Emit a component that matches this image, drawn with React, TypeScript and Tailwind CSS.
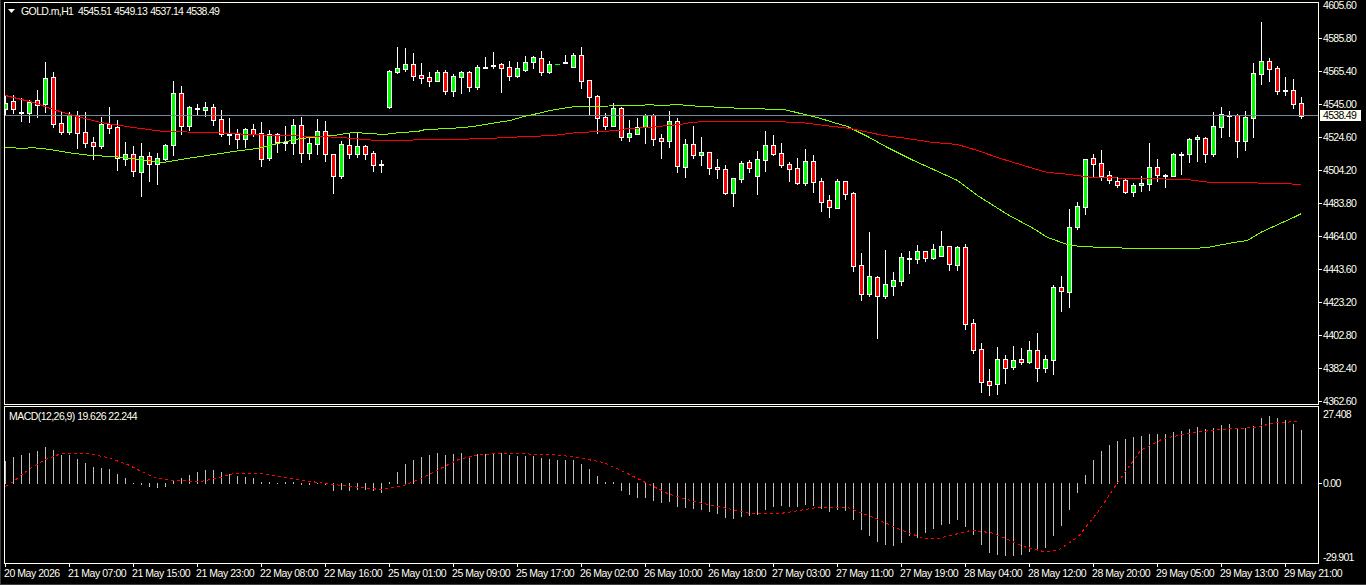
// MT4 style chart: GOLD.m H1 with two moving averages and MACD
type Candle = [number, number, number, number, number]

// high, body top, body bottom, low (page pixels), kind: 0 red, 1 green, 2 doji, 3 flat green
const candles: Candle[] = [
  [96, 103, 109, 115, 1], [95, 101, 109, 113, 0], [98, 112, 112, 121, 2], [100, 102, 113, 122, 1],
  [90, 100, 105, 117, 0], [62, 78, 104, 112, 1], [72, 77, 124, 127, 0], [112, 123, 132, 134, 0],
  [112, 115, 132, 134, 1], [111, 115, 133, 148, 0], [112, 132, 143, 147, 0], [137, 142, 146, 159, 0],
  [117, 124, 146, 148, 1], [107, 124, 128, 133, 0], [120, 127, 158, 170, 0], [142, 154, 159, 165, 1],
  [146, 154, 171, 176, 0], [143, 156, 172, 196, 1], [152, 156, 164, 181, 0], [153, 158, 164, 184, 1],
  [144, 145, 159, 160, 1], [81, 93, 145, 155, 1], [86, 93, 126, 134, 0], [106, 107, 126, 130, 1],
  [104, 108, 108, 114, 2], [102, 107, 110, 116, 1], [104, 107, 120, 125, 0], [110, 119, 134, 136, 0],
  [118, 134, 134, 144, 2], [129, 134, 139, 148, 0], [128, 129, 139, 147, 1], [124, 129, 134, 136, 0],
  [122, 133, 159, 166, 0], [130, 134, 158, 160, 1], [133, 134, 142, 152, 0], [126, 142, 142, 150, 2],
  [119, 125, 143, 154, 1], [117, 125, 153, 162, 0], [136, 143, 153, 159, 1], [119, 131, 144, 154, 1],
  [121, 131, 154, 161, 0], [154, 154, 176, 193, 0], [141, 144, 176, 178, 1], [134, 145, 154, 158, 0],
  [133, 146, 154, 157, 1], [145, 146, 154, 159, 0], [151, 153, 165, 171, 0], [160, 164, 164, 172, 2],
  [70, 71, 107, 108, 1], [47, 68, 72, 73, 1], [48, 64, 69, 71, 1], [53, 64, 76, 80, 0],
  [63, 75, 78, 83, 0], [72, 77, 81, 86, 0], [70, 72, 81, 81, 1], [70, 72, 91, 94, 0],
  [74, 76, 91, 96, 1], [71, 72, 77, 93, 1], [71, 72, 87, 91, 0], [65, 67, 87, 89, 1],
  [57, 67, 67, 68, 2], [52, 65, 65, 68, 2], [63, 64, 68, 92, 0], [61, 67, 76, 80, 0],
  [62, 68, 76, 77, 1], [56, 62, 70, 71, 1], [56, 57, 62, 68, 1], [51, 58, 72, 75, 0],
  [61, 64, 72, 73, 1], [64, 64, 64, 64, 3], [55, 62, 62, 63, 2], [53, 55, 67, 67, 1],
  [47, 55, 81, 88, 0], [80, 80, 97, 114, 0], [95, 96, 118, 133, 0], [113, 117, 126, 129, 0],
  [103, 108, 126, 126, 1], [107, 108, 137, 140, 0], [120, 133, 137, 141, 1], [118, 127, 134, 134, 1],
  [114, 115, 127, 143, 1], [114, 115, 139, 145, 0], [134, 138, 141, 158, 0], [111, 121, 141, 147, 1],
  [118, 121, 166, 172, 0], [139, 144, 167, 177, 1], [126, 144, 155, 158, 0], [137, 152, 155, 165, 1],
  [152, 152, 168, 174, 0], [159, 167, 169, 178, 0], [165, 169, 193, 194, 0], [178, 178, 193, 206, 1],
  [161, 163, 179, 182, 1], [160, 162, 168, 172, 0], [151, 159, 176, 194, 1], [131, 145, 160, 171, 1],
  [135, 145, 154, 155, 0], [143, 153, 165, 167, 0], [162, 164, 169, 181, 0], [158, 168, 183, 184, 0],
  [149, 161, 183, 185, 1], [155, 161, 182, 192, 0], [178, 181, 202, 211, 0], [195, 200, 207, 217, 0],
  [179, 181, 208, 208, 1], [181, 181, 194, 199, 0], [192, 193, 266, 271, 0], [253, 265, 294, 300, 0],
  [232, 276, 294, 296, 1], [276, 277, 296, 338, 0], [250, 284, 296, 298, 1], [272, 280, 286, 295, 1],
  [253, 257, 281, 285, 1], [251, 258, 258, 273, 2], [245, 251, 259, 263, 1], [251, 251, 258, 261, 0],
  [244, 249, 258, 259, 1], [231, 246, 256, 256, 1], [246, 246, 264, 270, 0], [246, 247, 265, 270, 1],
  [244, 247, 324, 329, 0], [319, 323, 350, 353, 0], [343, 349, 382, 392, 0], [369, 381, 385, 395, 0],
  [347, 359, 384, 394, 1], [355, 359, 368, 383, 0], [346, 360, 367, 369, 1], [348, 359, 362, 364, 0],
  [341, 350, 362, 363, 1], [333, 350, 368, 381, 0], [355, 359, 368, 372, 1], [285, 287, 360, 374, 1],
  [276, 287, 291, 311, 0], [209, 227, 292, 307, 1], [202, 206, 227, 229, 1], [159, 159, 207, 214, 1],
  [154, 158, 164, 177, 0], [150, 163, 176, 180, 0], [171, 175, 180, 183, 0], [177, 181, 185, 187, 0],
  [179, 180, 192, 193, 0], [183, 185, 192, 196, 1], [176, 183, 185, 191, 1], [143, 167, 184, 190, 1],
  [159, 167, 175, 181, 0], [174, 175, 175, 187, 2], [153, 154, 176, 176, 1], [152, 154, 154, 174, 2],
  [138, 139, 154, 162, 1], [135, 137, 139, 161, 1], [137, 138, 154, 162, 0], [112, 126, 154, 156, 1],
  [107, 114, 127, 137, 1], [111, 115, 115, 136, 2], [114, 115, 141, 157, 0], [111, 117, 141, 150, 1],
  [63, 73, 118, 137, 1], [22, 61, 74, 84, 1], [58, 61, 69, 81, 0], [66, 68, 91, 94, 0],
  [77, 90, 90, 95, 2], [79, 90, 104, 108, 0], [97, 103, 116, 118, 0],
]

const greenMa = '5,147 25,148 30,147 50,149 67,152 90,155 113,156 140,159 163,162 180,159 200,156 233,151 257,148 277,143 300,138 333,135 353,132 370,133 383,134 400,132 417,131 425,129 450,128 473,126 490,123 510,120 523,116 533,114 550,110 567,107 577,106 640,105 650,104 657,105 682,104 683,105 705,106 722,107 745,108 783,109 792,111 800,113 817,117 833,122 847,126 867,136 887,147 913,160 933,169 957,180 977,195 1007,214 1033,228 1047,237 1067,244 1080,246 1105,247 1137,248 1193,248 1207,247 1233,242 1247,240 1260,232 1293,217 1301,213'
const redMa = '5,95 33,102 53,109 73,115 100,122 133,127 163,131 210,132 250,134 277,135 320,136 340,137 377,140 400,140 425,139 450,139 488,138 505,137 528,136 553,135 577,132 600,131 617,130 627,128 650,127 667,125 680,124 690,122 705,121 745,121 777,121 793,122 800,122 833,126 850,128 883,135 900,137 933,142 957,144 977,150 1000,158 1033,168 1047,172 1060,173 1093,177 1187,179 1210,182 1233,182 1282,183 1301,184'
const signalLine = '5,486 13,481 20,475 30,468 43,460 55,455 63,453 87,453 107,457 127,464 143,472 157,478 173,480 200,481 220,477 233,473 263,473 280,476 317,482 350,486 380,489 403,485 423,477 440,468 458,459 480,454 503,453 553,454 577,457 603,462 627,473 647,483 667,493 693,501 727,508 750,513 780,513 817,507 847,507 873,517 897,528 923,538 937,538 950,535 970,530 990,532 1003,537 1023,546 1043,551 1057,550 1077,537 1097,512 1120,478 1140,450 1163,438 1193,432 1220,429 1253,427 1277,422 1300,421'

const macd = [
  461, 457, 455, 453, 451, 447, 450, 455, 455, 459, 463, 467, 468, 469, 474, 478, 483, 484, 486, 487,
  486, 481, 478, 475, 472, 470, 470, 472, 474, 476, 477, 478, 482, 482, 483, 482, 482, 484, 484, 483,
  484, 490, 489, 490, 489, 489, 490, 492, 482, 472, 464, 460, 457, 455, 453, 455, 454, 453, 456, 454,
  454, 454, 453, 455, 456, 456, 456, 458, 459, 460, 460, 460, 464, 469, 476, 482, 482, 490, 494, 497,
  497, 500, 502, 501, 506, 507, 508, 509, 511, 513, 517, 518, 516, 515, 514, 509, 506, 505, 506, 506,
  504, 505, 508, 511, 509, 510, 519, 529, 535, 541, 544, 545, 542, 535, 537, 532, 528, 524, 523, 519,
  526, 534, 544, 552, 554, 555, 555, 554, 551, 550, 547, 535, 525, 509, 492, 475, 460, 451, 445, 441,
  439, 437, 436, 434, 434, 434, 432, 431, 429, 427, 429, 428, 425, 424, 428, 428, 426, 418, 416, 418,
  420, 424, 430,
]

const priceLabels = ['4605.60', '4585.80', '4565.40', '4545.00', '4524.60', '4504.20', '4483.80', '4464.00', '4443.60', '4423.20', '4402.80', '4382.40', '4362.60']
const timeLabels = ['20 May 2026', '21 May 07:00', '21 May 15:00', '21 May 23:00', '22 May 08:00', '22 May 16:00', '25 May 01:00', '25 May 09:00', '25 May 17:00', '26 May 02:00', '26 May 10:00', '26 May 18:00', '27 May 03:00', '27 May 11:00', '27 May 19:00', '28 May 04:00', '28 May 12:00', '28 May 20:00', '29 May 05:00', '29 May 13:00', '29 May 21:00']

const shift = (points: string) =>
  points.split(' ').map((p) => p.split(',').map((n) => Number(n) + 0.5).join(',')).join(' ')

function CandleMark({ candle, index }: { candle: Candle; index: number }) {
  const x = 5 + 8 * index
  const [high, top, bottom, low, kind] = candle
  if (kind === 3) return <rect x={x - 2} y={top} width={5} height={1} fill="#00ff00" />
  return (
    <g>
      <rect x={x} y={high} width={1} height={low - high + 1} fill="#ffffff" />
      {kind === 2 ? (
        <rect x={x - 2} y={top} width={5} height={2} fill="#ffffff" />
      ) : (
        <rect
          x={x - 1.5}
          y={top + 0.5}
          width={4}
          height={bottom - top}
          fill={kind === 1 ? '#00ff00' : '#ff0000'}
          stroke="#ffffff"
        />
      )}
    </g>
  )
}

function PriceChart() {
  return (
    <svg width={1313} height={401} viewBox="5 3 1313 401" shapeRendering="crispEdges" className="block">
      {candles.map((c, i) => (
        <CandleMark key={i} candle={c} index={i} />
      ))}
      <rect x={5} y={115} width={1313} height={1} fill="#778899" />
      <polyline points={shift(greenMa)} fill="none" stroke="#7fff00" />
      <polyline points={shift(redMa)} fill="none" stroke="#ff0000" />
    </svg>
  )
}

function MacdChart() {
  return (
    <svg width={1313} height={156} viewBox="5 407 1313 156" shapeRendering="crispEdges" className="block">
      {macd.map((v, i) => (
        <rect key={i} x={5 + 8 * i} y={Math.min(v, 483)} width={1} height={Math.abs(v - 483) + 1} fill="#c0c0c0" />
      ))}
      <polyline points={shift(signalLine)} fill="none" stroke="#ff0000" strokeDasharray="3 3" />
    </svg>
  )
}

function AxisRow({ label, tick = true, className = '' }: { label: string; tick?: boolean; className?: string }) {
  return (
    <div className={`flex items-center ${className}`}>
      <div className={tick ? 'w-[3px] h-px bg-[#fffff0]' : 'w-[3px] h-px'} />
      <span className="ml-[1px] tracking-[-0.7px]">{label}</span>
    </div>
  )
}

export default function App() {
  return (
    <div className="w-[1366px] h-[585px] overflow-hidden bg-black border-l border-b border-[#3c3c3c] pl-[3px] pt-[2px] text-[#fffff0] text-[10.5px] leading-none font-['Liberation_Sans',sans-serif]">
      <div className="flex h-[403px]">
        <div className="relative w-[1315px] border border-[#fffff0]">
          <PriceChart />
          <div className="absolute left-[3px] top-[3px] flex items-center">
            <svg width={7} height={4} viewBox="0 0 7 4" className="block">
              <polygon points="0,0 7,0 3.5,4" fill="#fffff0" />
            </svg>
            <span className="ml-[6px] w-[57px] shrink-0 whitespace-nowrap tracking-[-0.6px]">GOLD.m,H1</span>
            <div className="flex gap-[3px] tracking-[-0.7px]">
              <span>4545.51</span>
              <span>4549.13</span>
              <span>4537.14</span>
              <span>4538.49</span>
            </div>
          </div>
        </div>
        <div className="relative flex-1">
          <div className="-mt-[13px] flex flex-col">
            {priceLabels.map((label, i) => (
              <AxisRow key={label} label={label} tick={i > 0} className="h-[33px]" />
            ))}
          </div>
          <div className="absolute left-px top-[108px] flex h-[11px] w-[41px] items-center bg-[#fffff0] pl-[3px] text-black tracking-[-0.7px]">
            4538.49
          </div>
        </div>
      </div>

      <div className="mt-px flex h-[158px]">
        <div className="relative w-[1315px] border border-[#fffff0]">
          <MacdChart />
          <div className="absolute left-[4px] top-[4px] tracking-[-0.55px]">MACD(12,26,9) 19.626 22.244</div>
        </div>
        <div className="flex flex-col pt-px">
          <AxisRow label="27.408" tick={false} className="h-[14px]" />
          <AxisRow label="0.00" className="mt-[55px] h-[14px]" />
          <AxisRow label="-29.901" tick={false} className="mt-[60px] h-[14px]" />
        </div>
      </div>

      <div className="ml-px flex">
        {timeLabels.map((label) => (
          <div key={label} className="w-[64px] shrink-0">
            <div className="w-px h-[3px] bg-[#fffff0]" />
            <div className="-ml-px mt-[1px] whitespace-nowrap tracking-[-0.45px]">{label}</div>
          </div>
        ))}
      </div>
    </div>
  )
}
